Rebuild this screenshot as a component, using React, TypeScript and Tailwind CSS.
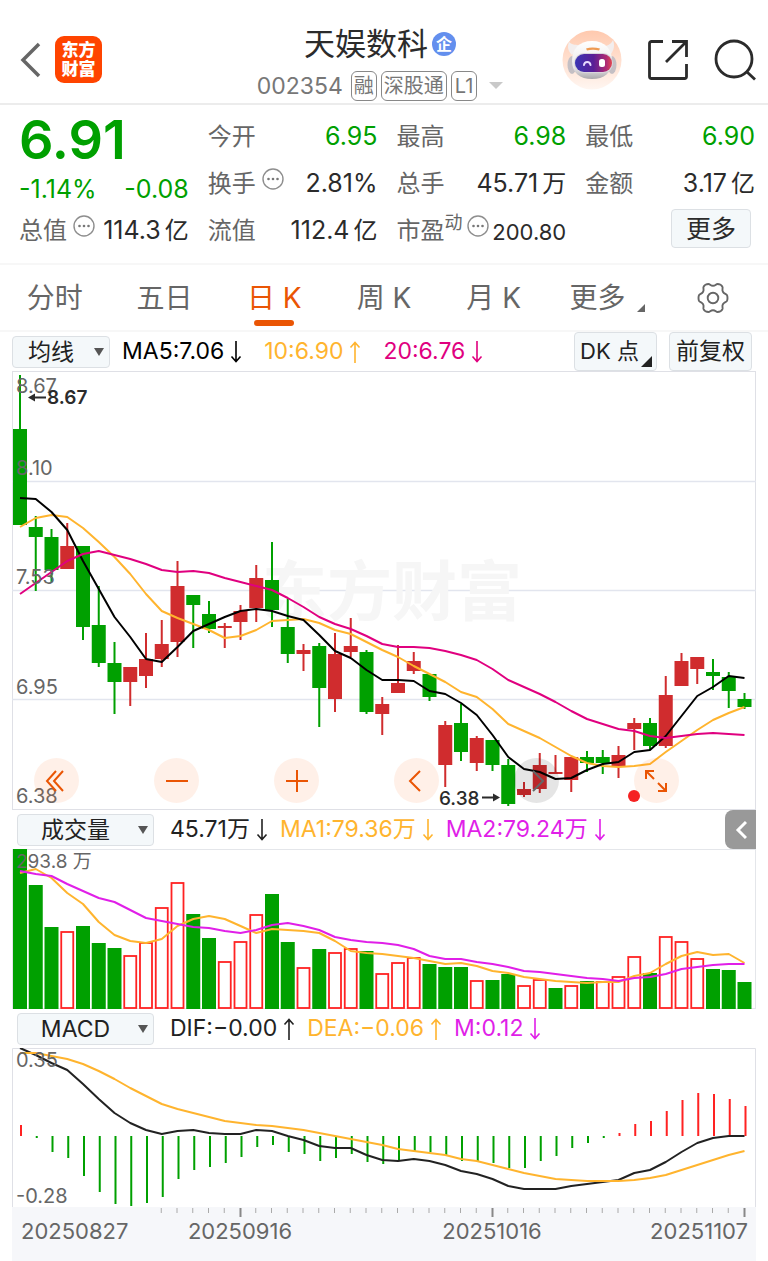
import type { ReactNode } from 'react';

const FONT = 'font-[Inter,"Noto_Sans_CJK_SC",sans-serif]';

const UP = '#d02c2e';
const DOWN = '#00a000';

// All panes share one x axis: the first day sits at 20, each next one 15.75 further
const dayX = (i: number) => 20 + i * 15.75;

const toPoints = (ys: number[]) => ys.map((y, i) => `${dayX(i)},${y}`).join(' ');

// [rising, high, body top, body bottom, low]
const candles: [number, number, number, number, number][] = [
  [0, 375, 429, 525, 525], [0, 516, 527, 537, 591], [0, 529, 537, 570, 582], [1, 523, 546, 569, 569],
  [0, 546, 546, 627, 640], [0, 586, 625, 663, 667], [0, 642, 663, 682, 714], [1, 667, 667, 682, 706],
  [1, 633, 659, 676, 688], [1, 620, 644, 659, 667], [1, 561, 586, 642, 657], [0, 595, 595, 605, 648],
  [0, 601, 614, 629, 633], [1, 623, 626, 628, 648], [1, 605, 611, 622, 640], [1, 565, 578, 608, 622],
  [0, 542, 580, 610, 627], [0, 599, 627, 654, 663], [1, 644, 650, 654, 671], [0, 643, 646, 688, 727],
  [1, 633, 654, 699, 712], [1, 618, 646, 652, 657], [0, 650, 652, 712, 714], [1, 697, 704, 714, 735],
  [1, 645, 683, 693, 693], [1, 652, 661, 671, 674], [0, 674, 674, 697, 701], [1, 721, 725, 765, 787],
  [0, 704, 723, 752, 761], [1, 736, 738, 763, 771], [0, 740, 740, 765, 771], [0, 759, 765, 804, 806],
  [1, 782, 789, 795, 797], [1, 753, 765, 789, 793], [1, 755, 772, 774, 774], [1, 757, 757, 780, 792],
  [0, 751, 757, 763, 772], [0, 750, 757, 763, 774], [1, 746, 755, 766, 778], [1, 718, 723, 729, 750],
  [0, 718, 723, 746, 750], [1, 676, 695, 746, 748], [1, 653, 661, 686, 686], [1, 657, 657, 669, 684],
  [0, 659, 672, 676, 690], [0, 672, 677, 691, 708], [0, 693, 699, 707, 709],
];

const ma5 = [
  498, 499, 512, 530, 561, 589, 617, 637, 659, 662, 647, 631, 624, 617, 611, 609, 611, 616, 620, 635, 651, 658, 670,
  680, 680, 681, 691, 694, 703, 715, 735, 757, 769, 772, 779, 778, 770, 764, 762, 752, 750, 736, 716, 696, 687, 676, 678,
];

const ma10 = [
  527, 518, 515, 517, 528, 542, 557, 574, 594, 611, 618, 624, 630, 638, 636, 630, 621, 620, 619, 623, 630, 634, 642,
  650, 657, 666, 674, 682, 692, 697, 709, 724, 731, 738, 747, 756, 763, 766, 767, 766, 764, 752, 741, 730, 720, 713, 707,
];

const ma20 = [
  594, 583, 572, 561, 554, 551, 555, 559, 564, 570, 572, 571, 573, 578, 582, 586, 590, 598, 607, 617, 624, 629, 636,
  644, 647, 647, 648, 651, 655, 660, 669, 680, 687, 694, 702, 711, 719, 724, 729, 731, 736, 738, 736, 734, 733, 734, 735,
];

// [rising, bar top]
const volumes: [number, number][] = [
  [0, 849], [0, 885], [0, 927], [1, 931], [0, 926], [0, 943], [0, 948], [1, 955], [1, 942], [1, 907],
  [1, 882], [0, 914], [0, 938], [1, 961], [1, 941], [1, 914], [0, 894], [0, 942], [1, 967], [0, 949],
  [1, 952], [1, 948], [0, 951], [1, 973], [1, 962], [1, 957], [0, 964], [0, 967], [0, 967], [1, 980],
  [0, 980], [0, 974], [1, 985], [1, 979], [0, 988], [1, 985], [0, 981], [1, 981], [1, 976], [1, 956],
  [0, 973], [1, 936], [1, 941], [1, 958], [0, 969], [0, 970], [0, 982],
];

const volumeMa1 = [
  873, 869, 878, 893, 904, 922, 935, 941, 943, 939, 926, 919, 916, 919, 926, 933, 929, 930, 931, 933, 941, 951, 953,
  954, 956, 958, 961, 964, 963, 966, 971, 973, 977, 979, 981, 982, 983, 982, 982, 976, 973, 964, 956, 952, 955, 954, 963,
];

const volumeMa2 = [
  871, 874, 876, 884, 891, 898, 902, 910, 918, 921, 924, 927, 928, 931, 933, 930, 925, 923, 926, 930, 937, 940, 942,
  943, 945, 949, 956, 959, 959, 962, 964, 967, 971, 972, 974, 976, 978, 979, 981, 978, 977, 974, 969, 967, 965, 964, 964,
];

const MACD_ZERO = 1136;

const macdBars = [
  1125, 1138, 1152, 1158, 1176, 1192, 1204, 1206, 1203, 1197, 1179, 1170, 1167, 1163, 1157, 1147, 1145, 1152, 1154,
  1161, 1158, 1154, 1162, 1164, 1160, 1152, 1152, 1155, 1161, 1161, 1163, 1168, 1168, 1161, 1156, 1148, 1143, 1138,
  1133, 1124, 1121, 1111, 1100, 1093, 1094, 1099, 1106,
];

const dif = [
  1048, 1055, 1063, 1070, 1084, 1099, 1113, 1123, 1130, 1134, 1131, 1130, 1133, 1134, 1134, 1130, 1131, 1136, 1140,
  1146, 1148, 1148, 1155, 1160, 1161, 1159, 1161, 1165, 1171, 1174, 1179, 1186, 1189, 1189, 1189, 1186, 1184, 1182,
  1180, 1173, 1170, 1162, 1152, 1143, 1138, 1136, 1136,
];

const dea = [
  1053, 1053, 1056, 1059, 1064, 1071, 1079, 1088, 1096, 1104, 1109, 1113, 1117, 1121, 1123, 1125, 1126, 1128, 1130,
  1133, 1136, 1139, 1142, 1145, 1149, 1151, 1153, 1155, 1159, 1161, 1165, 1169, 1173, 1176, 1179, 1180, 1181, 1181,
  1181, 1180, 1178, 1175, 1170, 1165, 1160, 1155, 1151,
];

const tabs = ['分时', '五日', '日 K', '周 K', '月 K'];

function Line({ data, color }: { data: number[]; color: string }) {
  return <polyline points={toPoints(data)} fill="none" stroke={color} strokeWidth="2" strokeLinejoin="round" />;
}

function MoreDots() {
  return (
    <svg className="mb-2.5 h-[22px] w-[22px] shrink-0" viewBox="0 0 22 22" aria-hidden="true">
      <circle cx="11" cy="11" r="10" fill="none" stroke="#8e8e8e" strokeWidth="1.4" />
      <circle cx="6.5" cy="11" r="1.3" fill="#777" />
      <circle cx="11" cy="11" r="1.3" fill="#777" />
      <circle cx="15.5" cy="11" r="1.3" fill="#777" />
    </svg>
  );
}

function Arrow({ up = false }: { up?: boolean }) {
  return (
    <svg className="h-[22px] w-3 shrink-0" viewBox="0 0 12 22" fill="none" stroke="currentColor" strokeWidth="1.6">
      {up ? <path d="M6 22V1.5M1.5 6.5 6 1.5l4.5 5" /> : <path d="M6 0v20.500M1.500 15.500l4.500 5 4.500-5" />}
    </svg>
  );
}

function Reading({ className, up, children }: { className: string; up?: boolean; children: ReactNode }) {
  return (
    <span className={`flex items-center gap-1.5 whitespace-nowrap text-[23px] ${className}`}>
      {children}
      <Arrow up={up} />
    </span>
  );
}

function IndicatorSelect({ label, value, className }: { label: string; value: string; className: string }) {
  return (
    <div className={`relative h-8 shrink-0 ${className}`}>
      <select
        aria-label={label}
        defaultValue={value}
        className="h-full w-full appearance-none rounded border border-[#dce0e4] bg-[#f4f8fa] pr-5 text-center text-[23px] leading-[30px] text-[#222]"
      >
        <option>{value}</option>
      </select>
      <svg className="pointer-events-none absolute right-1.5 top-3 h-2 w-2.5" viewBox="0 0 10 8" aria-hidden="true">
        <path d="M0 0h10L5 8z" fill="#555" />
      </svg>
    </div>
  );
}

interface StatProps {
  label: string;
  value: string;
  unit?: string;
  green?: boolean;
  extra?: ReactNode;
}

function Stat({ label, value, unit, green, extra }: StatProps) {
  return (
    <div className="flex h-[47px] items-center justify-between whitespace-nowrap">
      <dt className="flex items-center gap-1.5 text-2xl text-[#666]">
        {label}
        {extra}
      </dt>
      <dd className={`text-[25px] ${green ? 'text-[#00a000]' : 'text-[#2b2b2b]'}`}>
        {value}
        {unit && <span className="ml-1 text-2xl">{unit}</span>}
      </dd>
    </div>
  );
}

function Robot() {
  return (
    <svg className="h-[60px] w-[60px]" viewBox="0 0 60 60" aria-hidden="true">
      <defs>
        <linearGradient id="halo" x1="0" y1="0" x2="0" y2="1">
          <stop offset="0" stopColor="#ffc9ae" />
          <stop offset="1" stopColor="#fff6f1" />
        </linearGradient>
        <linearGradient id="shell" x1="0" y1="0" x2="0" y2="1">
          <stop offset="0" stopColor="#ffffff" />
          <stop offset="0.7" stopColor="#e9e7e8" />
          <stop offset="1" stopColor="#aaa7ab" />
        </linearGradient>
        <linearGradient id="visor" x1="0" y1="0" x2="1" y2="0">
          <stop offset="0" stopColor="#3a35b4" />
          <stop offset="0.5" stopColor="#5a1f96" />
          <stop offset="0.85" stopColor="#b02a72" />
          <stop offset="1" stopColor="#e2474f" />
        </linearGradient>
      </defs>
      <circle cx="30" cy="30" r="29.500" fill="url(#halo)" />
      <path d="M7 12c-2 5-1 9 3 13l9-10c-5 0-9 0-12-3zM51 10c2 5 1 10-2 14l-8-8c5 0 8-2 10-6z" fill="#f3eeee" />
      <ellipse cx="10" cy="35" rx="4.500" ry="9" fill="#c4bfc4" />
      <ellipse cx="50" cy="35" rx="4.500" ry="9" fill="#c4bfc4" />
      <path d="M30 11c13 0 20 8 20 20 0 12-8 18-20 18S10 43 10 31c0-12 7-20 20-20z" fill="url(#shell)" />
      <path d="M24 18.500c4-1.500 9-1.500 14 0l-1 2c-4-1-8-1-12 0z" fill="#ee9a52" />
      <rect x="12" y="23" width="39" height="20" rx="10" fill="#d9d5dc" />
      <rect x="13" y="24" width="37" height="18" rx="9" fill="url(#visor)" />
      <path d="M22 35c.5-4 6-4 6.500 0" fill="none" stroke="#e7dcff" strokeWidth="2" strokeLinecap="round" />
      <rect x="37" y="29" width="6" height="8" rx="2.500" fill="#fff" />
    </svg>
  );
}

function Header() {
  return (
    <header className="flex h-[105px] items-center justify-between border-b-2 border-[#ececec] pl-[18px] pr-3 pt-4">
      <div className="flex w-[180px] items-center gap-3">
        <button aria-label="返回">
          <svg className="h-9 w-[25px]" viewBox="0 0 25 36" fill="none" stroke="#666" strokeWidth="3.500">
            <path d="M21 2 5 18l16 16" />
          </svg>
        </button>
        <a
          href="#home"
          className="flex h-[47px] w-[47px] flex-col items-center justify-center rounded-[9px] bg-[#ff4400] text-[17px] font-black leading-[19px] text-white"
        >
          <span>东方</span>
          <span>财富</span>
        </a>
      </div>

      <div className="flex flex-col items-center pt-2.5">
        <h1 className="flex items-center gap-1 text-[31px] leading-[42px] text-[#2b2b2b]">
          天娱数科
          <span className="flex h-6 w-6 items-center justify-center rounded-full bg-[#638fee] text-base font-bold leading-6 text-white">
            企
          </span>
        </h1>
        <div className="flex items-center gap-1 whitespace-nowrap text-[23px] leading-[42px] text-[#777]">
          <span className="mr-1">002354</span>
          <span className="h-[30px] rounded-md border border-[#888] px-[2px] text-xl leading-7">融</span>
          <span className="h-[30px] rounded-md border border-[#888] px-[2px] text-xl leading-7">深股通</span>
          <span className="h-[30px] rounded-md border border-[#888] px-[3px] text-xl leading-7">L1</span>
          <svg className="ml-2 h-[7px] w-[14px]" viewBox="0 0 14 7" aria-hidden="true">
            <path d="M0 0h14L7 7z" fill="#c9c9c9" />
          </svg>
        </div>
      </div>

      <div className="flex items-center gap-[25px]">
        <button aria-label="智能助手">
          <Robot />
        </button>
        <button aria-label="分享">
          <svg className="h-[42px] w-[42px]" viewBox="0 0 42 42" fill="none" stroke="#2b2b2b" strokeWidth="2.800">
            <path d="M16 2.500H4.500a2 2 0 0 0-2 2v33a2 2 0 0 0 2 2h33a2 2 0 0 0 2-2V25M25 2.500h14.500V18M39.500 2.500 19 23" />
          </svg>
        </button>
        <button aria-label="搜索">
          <svg className="h-[42px] w-[42px]" viewBox="0 0 42 42" fill="none" stroke="#2b2b2b" strokeWidth="2.800">
            <circle cx="20" cy="20" r="18" />
            <path d="m32.500 32.500 8.500 8" />
          </svg>
        </button>
      </div>
    </header>
  );
}

function Quote() {
  return (
    <section className="grid grid-cols-4 gap-x-[19px] pb-[9px] pl-[19px] pr-[13px] pt-2">
      <div>
        <p className="h-[59px] text-[54px] font-semibold leading-[54px] text-[#00a000]">6.91</p>
        <p className="flex h-[35px] items-center justify-between text-[25px] text-[#00a000]">
          <span>-1.14%</span>
          <span>-0.08</span>
        </p>
        <dl>
          <Stat label="总值" value="114.3" unit="亿" extra={<MoreDots />} />
        </dl>
      </div>
      <dl>
        <Stat label="今开" value="6.95" green />
        <Stat label="换手" value="2.81%" extra={<MoreDots />} />
        <Stat label="流值" value="112.4" unit="亿" />
      </dl>
      <dl>
        <Stat label="最高" value="6.98" green />
        <Stat label="总手" value="45.71" unit="万" />
        <div className="flex h-[47px] items-center justify-between whitespace-nowrap">
          <dt className="flex items-center text-2xl text-[#666]">
            市盈
            <span className="mb-4 mr-1 text-lg leading-5">动</span>
            <MoreDots />
          </dt>
          <dd className="pt-1 text-[22px] text-[#2b2b2b]">200.80</dd>
        </div>
      </dl>
      <div>
        <dl>
          <Stat label="最低" value="6.90" green />
          <Stat label="金额" value="3.17" unit="亿" />
        </dl>
        <div className="flex justify-end pr-1">
          <button className="mt-[2px] h-[39px] w-20 rounded border border-[#dce0e4] bg-[#f4f8fa] text-[25px] leading-9 text-[#2b2b2b]">
            更多
          </button>
        </div>
      </div>
    </section>
  );
}

function PeriodTabs() {
  return (
    <nav className="grid h-[69px] grid-cols-7 border-y-2 border-[#f7f7f7] text-[28px] text-[#666]">
      {tabs.map((tab) => (
        <button
          key={tab}
          className={`relative flex items-center justify-center whitespace-nowrap ${tab === '日 K' ? 'text-[#ea5504]' : ''}`}
        >
          {tab}
          {tab === '日 K' && <span className="absolute bottom-1 h-1.5 w-10 rounded-full bg-[#ea5504]" />}
        </button>
      ))}
      <button className="flex items-center justify-center gap-3 whitespace-nowrap pl-2">
        更多
        <svg className="mt-5 h-2 w-2" viewBox="0 0 8 8" aria-hidden="true">
          <path d="M8 0v8H0z" fill="#666" />
        </svg>
      </button>
      <button aria-label="设置" className="flex items-center justify-center">
        <svg className="h-8 w-8" viewBox="0 0 32 32" fill="none" stroke="#666" strokeWidth="1.900" strokeLinejoin="round">
          <path d="M11.500 2c1.500 0 2 1.800 4.500 1.800S19 2 20.500 2c2 0 4.500 1.500 5 3 .5 1.700-.8 2.500.4 4.700s3 2 4 3.300c.8 1.300.8 4.700 0 6-1 1.300-2.800 1.100-4 3.300s.1 3-.4 4.700c-.5 1.500-3 3-5 3-1.500 0-2-1.800-4.500-1.800S13 30 11.500 30c-2 0-4.500-1.500-5-3-.5-1.700.8-2.500-.4-4.700s-3-2-4-3.300c-.8-1.300-.8-4.700 0-6 1-1.300 2.800-1.100 4-3.300s-.1-3 .4-4.700c.5-1.500 3-3 5-3z" />
          <circle cx="16" cy="16" r="5.300" />
        </svg>
      </button>
    </nav>
  );
}

function ChartButton({ label, dim, children }: { label: string; dim?: boolean; children: ReactNode }) {
  return (
    <button
      aria-label={label}
      className={`flex h-[45px] w-[45px] items-center justify-center rounded-full ${
        dim ? 'bg-black/10 text-[#666]' : 'bg-[#ff6a1a]/10 text-[#ea5504]'
      }`}
    >
      <svg className="h-6 w-6" viewBox="0 0 24 24" fill="none" stroke="currentColor" strokeWidth="2">
        {children}
      </svg>
    </button>
  );
}

function PriceChart() {
  return (
    <div className="relative">
      <svg className="block w-full" viewBox="12 371 744 439" role="img" aria-label="日K线图">
        <rect x="12.500" y="371.500" width="743" height="438" fill="#fff" stroke="#dfe0e6" />
        <g stroke="#e2e5ee" strokeWidth="1.500">
          <path d="M12 481.500h744M12 590.500h744M12 699.500h744" />
        </g>
        <text x="262" y="615" fontSize="65" fontWeight="700" fill="#f6f6f6">
          东方财富
        </text>
        {candles.map(([rising, high, top, bottom, low], i) => (
          <g key={i} fill={rising ? UP : DOWN}>
            <rect x={dayX(i) - 1} y={high} width="2" height={low - high} />
            <rect x={dayX(i) - 7} y={top} width="14" height={bottom - top} />
          </g>
        ))}
        <Line data={ma10} color="#ffb42e" />
        <Line data={ma5} color="#000" />
        <Line data={ma20} color="#e0007f" />
        <g fontSize="20" fill="#666">
          <text x="16" y="393">8.67</text>
          <text x="16" y="475">8.10</text>
          <text x="16" y="584">7.53</text>
          <text x="16" y="694">6.95</text>
          <text x="16" y="803">6.38</text>
        </g>
        <g fontSize="19" fontWeight="600" fill="#2b2b2b">
          <text x="47" y="404">8.67</text>
          <text x="439" y="805" fontWeight="500">6.38</text>
          <path d="M28 397.500l7-4v3h11v2H35v3zM500 797.500l-7-4v3h-11v2h11v3z" />
        </g>
        <circle cx="634" cy="796" r="6" fill="#f52222" />
      </svg>
      <div className="absolute bottom-[7px] left-[3%] right-[10.4%] flex justify-between">
        <ChartButton label="最早">
          <path d="M11 2 2 12l9 10M18 2 9 12l9 10" />
        </ChartButton>
        <ChartButton label="缩小">
          <path d="M1 12h22" />
        </ChartButton>
        <ChartButton label="放大">
          <path d="M1 12h22M12 1v22" />
        </ChartButton>
        <ChartButton label="向左">
          <path d="M16 2 6 12l10 10" />
        </ChartButton>
        <ChartButton label="向右" dim>
          <path d="M9 2l10 10L9 22" />
        </ChartButton>
        <ChartButton label="全屏">
          <path d="M2 10V2h8M2 2l8 8M14 14l8 8M22 14v8h-8" />
        </ChartButton>
      </div>
    </div>
  );
}

function VolumeChart() {
  return (
    <svg className="block w-full" viewBox="12 849 744 160" role="img" aria-label="成交量">
      <rect x="12.500" y="849.500" width="743" height="159" fill="#fff" stroke="#e4e6ea" />
      {volumes.map(([rising, top], i) =>
        rising ? (
          <rect key={i} x={dayX(i) - 6} y={top + 1} width="12" height={1007 - top} fill="#fff" stroke="#f22" strokeWidth="1.800" />
        ) : (
          <rect key={i} x={dayX(i) - 7} y={top} width="14" height={1009 - top} fill={DOWN} />
        ),
      )}
      <Line data={volumeMa1} color="#ffb42e" />
      <Line data={volumeMa2} color="#e01fe8" />
      <text x="16" y="868" fontSize="19" fill="#666">
        293.8 万
      </text>
    </svg>
  );
}

function MacdChart() {
  return (
    <svg className="block w-full" viewBox="12 1048 744 159" role="img" aria-label="MACD">
      <path d="M12.500 1207v-158.500h743V1207" fill="none" stroke="#dfe0e6" />
      {macdBars.map((y, i) => (
        <rect
          key={i}
          x={dayX(i)}
          y={Math.min(y, MACD_ZERO)}
          width="2"
          height={Math.abs(y - MACD_ZERO)}
          fill={y < MACD_ZERO ? '#f22' : DOWN}
        />
      ))}
      <Line data={dif} color="#222" />
      <Line data={dea} color="#ffb42e" />
      <g fontSize="20" fill="#666">
        <text x="16" y="1067">0.35</text>
        <text x="16" y="1203">-0.28</text>
      </g>
    </svg>
  );
}

function DateAxis() {
  return (
    <svg className="block w-full bg-[#f6f7fa]" viewBox="12 1207 744 54" role="img" aria-label="日期">
      {candles.map((_, i) => {
        if (i < 9) return null;
        const major = i === 14 || i === 30 || i === 46;
        return (
          <rect key={i} x={dayX(i) - 1} y="1208" width={major ? 2 : 1} height={major ? 9 : 5} fill={major ? '#888' : '#aaa'} />
        );
      })}
      <g fontSize="22" fill="#666">
        <text x="21" y="1239">20250827</text>
        <text x="240" y="1239" textAnchor="middle">20250916</text>
        <text x="492" y="1239" textAnchor="middle">20251016</text>
        <text x="748" y="1239" textAnchor="end">20251107</text>
      </g>
    </svg>
  );
}

export default function App() {
  return (
    <main className={`min-h-screen bg-white ${FONT}`}>
      <Header />
      <Quote />
      <PeriodTabs />

      <div className="px-3">
        {/* Moving averages */}
        <div className="flex h-[39px] items-center">
          <IndicatorSelect label="主图指标" value="均线" className="w-[98px]" />
          <div className="ml-3 flex gap-[22px]">
            <Reading className="text-black">MA5:7.06</Reading>
            <Reading className="text-[#ffb42e]" up>10:6.90</Reading>
            <Reading className="text-[#e0007f]">20:6.76</Reading>
          </div>
          <div className="ml-auto flex gap-3 pr-1 text-[23px] text-[#222]">
            <button className="relative h-[39px] w-[83px] whitespace-nowrap rounded border border-[#dce0e4] bg-[#f4f8fa] pr-3 text-[22px]">
              DK 点
              <svg className="absolute bottom-[3px] right-1 h-[11px] w-[11px]" viewBox="0 0 11 11" aria-hidden="true">
                <path d="M11 0v11H0z" fill="#222" />
              </svg>
            </button>
            <button className="h-[39px] w-[83px] whitespace-nowrap rounded border border-[#dce0e4] bg-[#f4f8fa]">
              前复权
            </button>
          </div>
        </div>
        <PriceChart />

        {/* Volume */}
        <div className="flex h-[39px] items-center pl-[5px]">
          <IndicatorSelect label="副图指标一" value="成交量" className="w-[137px]" />
          <div className="ml-4 flex gap-3">
            <Reading className="text-[#222]">45.71万</Reading>
            <Reading className="text-[#ffb42e]">MA1:79.36万</Reading>
            <Reading className="text-[#e01fe8]">MA2:79.24万</Reading>
          </div>
          <button aria-label="展开" className="ml-auto flex h-[39px] w-[31px] items-center justify-center rounded-l-lg bg-[#999]">
            <svg className="h-5 w-3" viewBox="0 0 12 20" fill="none" stroke="#fff" strokeWidth="3">
              <path d="m11 2-8 8 8 8" />
            </svg>
          </button>
        </div>
        <VolumeChart />

        {/* MACD */}
        <div className="flex h-[39px] items-center pl-[5px]">
          <IndicatorSelect label="副图指标二" value="MACD" className="w-[137px]" />
          <div className="ml-4 flex gap-3">
            <Reading className="text-[#222]" up>DIF:−0.00</Reading>
            <Reading className="text-[#ffb42e]" up>DEA:−0.06</Reading>
            <Reading className="text-[#e01fe8]">M:0.12</Reading>
          </div>
        </div>
        <MacdChart />
        <DateAxis />
      </div>
    </main>
  );
}
